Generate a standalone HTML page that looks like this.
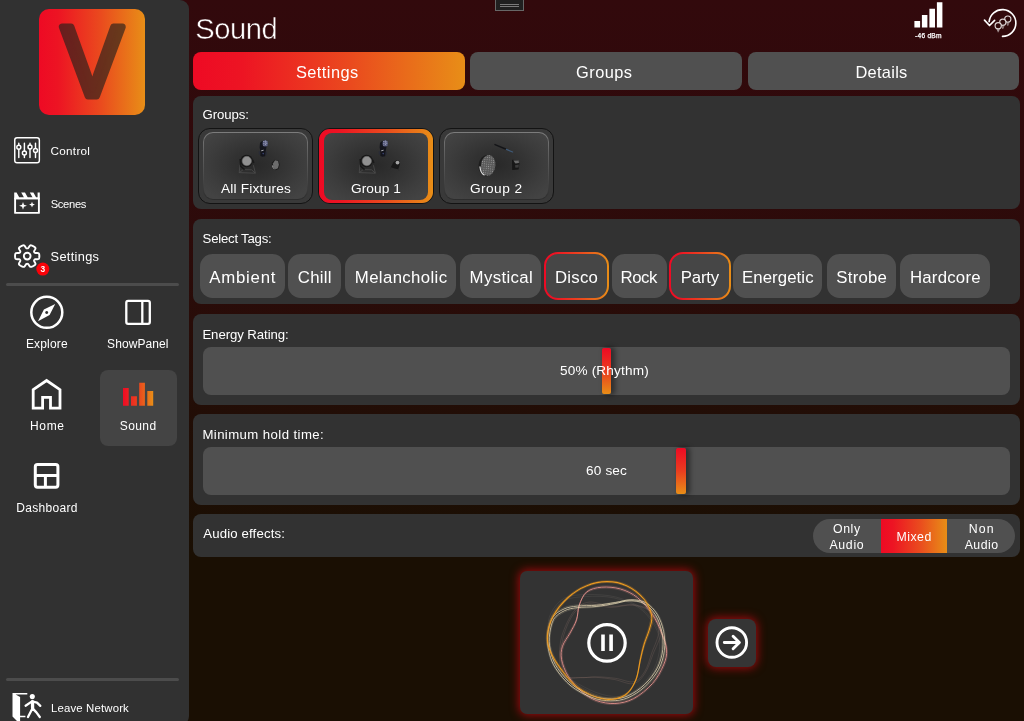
<!DOCTYPE html>
<html lang="en">
<head>
<meta charset="utf-8">
<title>Sound</title>
<style>
*{box-sizing:border-box;margin:0;padding:0}
html,body{width:1024px;height:721px;overflow:hidden}
body{font-family:"Liberation Sans",sans-serif;color:#fff;background:linear-gradient(180deg,#32090c 0%,#2f0a0b 25%,#280c08 45%,#1f0e05 63%,#1a0f03 77%,#1a0f03 100%);position:relative}
.a{position:absolute}
.t{position:absolute;white-space:nowrap;line-height:20px;height:20px;color:#fff}
.grad{background:linear-gradient(90deg,#ee0a24 0%,#ed1423 18%,#ea4a1e 58%,#e88e17 100%)}
.vgrad{background:linear-gradient(180deg,#ee0a24 0%,#ea3d1f 50%,#e88e17 100%)}
#side{left:0;top:0;width:188.5px;height:725px;background:#313131;border-radius:0 9px 9px 0}
.sep{left:6px;width:173px;height:3px;border-radius:1.5px;background:#4c4c4c}
.tab{top:52px;height:38px;border-radius:8px;background-color:#505050}
.panel{left:193px;width:826.6px;background:#323232;border-radius:8px}
.chip{top:253.7px;height:44.4px;border-radius:12.5px;background:#505050}
.ring{border-radius:14px;padding:2px}
.ring i{display:block;width:100%;height:100%;border-radius:12px;background:#464646}
.track{left:202.8px;width:807.4px;height:48px;background:#505050;border-radius:8px}
.thumb{width:9.6px;height:45.6px;border-radius:2px;box-shadow:3px 0 5px 1px rgba(0,0,0,.42)}
.gb{top:128.2px;width:115.2px;height:76px;border-radius:12px;background:#393939;border:1px solid #131313}
.gb i{position:absolute;left:4.2px;top:3.2px;right:4.2px;bottom:3.2px;border-radius:10px;border:1px solid transparent;background:radial-gradient(ellipse 62% 64% at 50% 48%,#292929 0%,#313131 35%,#3d3d3d 75%,#434343 100%) padding-box,linear-gradient(180deg,#7c7c7c 0%,#606060 30%,#474747 70%,#2c2c2c 100%) border-box}
.gb.sel{border-color:#131313}
.gb.sel b{position:absolute;left:0;top:0;right:0;bottom:0;border-radius:11px}
.gb.sel i{border:0;left:4.4px;right:4.4px;top:3.6px;bottom:3.4px;border-radius:8px;background:radial-gradient(ellipse 62% 64% at 50% 48%,#292929 0%,#313131 35%,#3d3d3d 75%,#434343 100%)}
svg{position:absolute;left:0;top:0;overflow:visible}
</style>
</head>
<body>
<div id="side" class="a"></div>
<div class="a grad" style="left:39.4px;top:8.5px;width:106px;height:106px;border-radius:10px"></div>
<div class="a sep" style="top:282.6px"></div>
<div class="a sep" style="top:678px"></div>
<div class="a" style="left:99.8px;top:369.7px;width:76.8px;height:76.8px;border-radius:8px;background:#444"></div>
<div class="a" style="left:495px;top:-1px;width:29px;height:12.4px;background:#202020;border:1px solid #676767;border-top:0"></div>
<div class="a" style="left:500px;top:4px;width:19px;height:1px;background:#7a7a7a"></div>
<div class="a" style="left:500px;top:6px;width:19px;height:1px;background:#7a7a7a"></div>
<div class="a tab grad" style="left:193px;width:272.2px"></div>
<div class="a tab" style="left:470.3px;width:271.8px"></div>
<div class="a tab" style="left:747.6px;width:271.6px"></div>
<div class="a panel" style="top:95.6px;height:113.2px"></div>
<div class="a panel" style="top:219.2px;height:85.2px"></div>
<div class="a panel" style="top:314.4px;height:90.2px"></div>
<div class="a panel" style="top:414.4px;height:90.2px"></div>
<div class="a panel" style="top:514.2px;height:43.1px"></div>
<div class="a gb" style="left:198.1px"><i></i></div>
<div class="a gb sel" style="left:318.4px"><b class="grad"></b><i></i></div>
<div class="a gb" style="left:438.6px"><i></i></div>
<div class="a chip" style="left:200.1px;width:84.8px"></div>
<div class="a chip" style="left:288.4px;width:52.8px"></div>
<div class="a chip" style="left:345px;width:111.0px"></div>
<div class="a chip" style="left:459.9px;width:81.6px"></div>
<div class="a ring grad" style="left:543.5px;top:252.2px;width:65.7px;height:47.4px"><i></i></div>
<div class="a chip" style="left:612px;width:54.7px"></div>
<div class="a ring grad" style="left:668.6px;top:252.2px;width:62.3px;height:47.4px"><i></i></div>
<div class="a chip" style="left:732.7px;width:89.8px"></div>
<div class="a chip" style="left:827px;width:69.2px"></div>
<div class="a chip" style="left:900.4px;width:89.5px"></div>
<div class="a track" style="top:346.9px"></div>
<div class="a track" style="top:446.9px"></div>
<div class="a thumb vgrad" style="left:601.6px;top:348.2px"></div>
<div class="a thumb vgrad" style="left:676.1px;top:448.2px"></div>
<div class="a" style="left:812.9px;top:518.8px;width:202.5px;height:33.9px;border-radius:17px;background:#505050;overflow:hidden"><div class="a grad" style="left:67.9px;top:0;width:66px;height:33.9px"></div></div>
<div class="a" style="left:520.2px;top:570.6px;width:173px;height:143.9px;border-radius:7px;background:#333;box-shadow:0 0 10px .5px rgba(180,10,18,.9)"></div>
<div class="a" style="left:707.8px;top:618.8px;width:47.9px;height:47.8px;border-radius:8px;background:#353535;box-shadow:0 0 10px .5px rgba(180,10,18,.9)"></div>
<svg width="1024" height="721" viewBox="0 0 1024 721" fill="none" stroke="none">
<defs><linearGradient id="g" x1="0" x2="1" y1="0" y2="0"><stop offset="0" stop-color="#ee0a24"/><stop offset=".55" stop-color="#ea4a1e"/><stop offset="1" stop-color="#e88e17"/></linearGradient></defs>
<g opacity=".66"><text x="92.3" y="95.7" text-anchor="middle" font-family="Liberation Sans, sans-serif" font-size="100" fill="#26211c" stroke="#26211c" stroke-width="7.2" stroke-linejoin="round" textLength="61.1" lengthAdjust="spacingAndGlyphs">V</text></g>
<g stroke="#fff" stroke-width="1.45" fill="none"><rect x="14.75" y="137.75" width="24.6" height="25" rx="2.3"/><path d="M18.8 143.2V145.2M18.8 149.4V157.6M24.4 143.2V150.9M24.4 155.1V157.6M30 143.2V144.9M30 149.1V157.6M35.5 143.2V148.3M35.5 152.5V157.6" stroke-linecap="round"/><circle cx="18.8" cy="147.3" r="2"/><circle cx="24.4" cy="153" r="2"/><circle cx="30" cy="147" r="2"/><circle cx="35.5" cy="150.4" r="2"/></g>
<g stroke="#fff" stroke-width="1.9" fill="none" stroke-linejoin="round"><path d="M15.1 198.4V212.9H38.9V198.4Z"/></g><path fill="#fff" d="M14.2 192.6H16.6L19.3 197.5H24L21.2 192.6H25L27.8 197.5H32.6L29.8 192.6H33.4L36.2 197.5H37.6V192.6H39.8V199.3H14.2Z"/><path fill="#fff" d="M23 201.9L24 204.8L26.9 205.8L24 206.8L23 209.7L22 206.8L19.1 205.8L22 204.8Z"/><path fill="#fff" d="M32 201.7L32.8 203.8L34.9 204.6L32.8 205.4L32 207.5L31.2 205.4L29.1 204.6L31.2 203.8Z"/>
<g stroke="#fff" stroke-width="1.9" fill="none" stroke-linejoin="round"><path d="M39.35 256.10 L39.35 256.40 L39.33 256.70 L39.31 257.00 L39.28 257.29 L39.24 257.59 L39.18 257.88 L39.11 258.17 L39.00 258.46 L38.83 258.72 L38.53 258.95 L38.05 259.12 L37.34 259.20 L36.53 259.21 L35.82 259.21 L35.30 259.25 L34.96 259.35 L34.72 259.47 L34.55 259.62 L34.42 259.78 L34.30 259.95 L34.20 260.13 L34.12 260.33 L34.07 260.54 L34.07 260.79 L34.16 261.12 L34.37 261.56 L34.73 262.14 L35.12 262.81 L35.41 263.42 L35.50 263.90 L35.43 264.25 L35.27 264.53 L35.06 264.76 L34.83 264.96 L34.59 265.15 L34.34 265.34 L34.08 265.51 L33.82 265.68 L33.55 265.84 L33.27 265.99 L33.00 266.14 L32.72 266.28 L32.43 266.41 L32.14 266.53 L31.85 266.64 L31.55 266.75 L31.24 266.83 L30.93 266.88 L30.60 266.88 L30.24 266.75 L29.84 266.44 L29.42 265.90 L29.00 265.25 L28.64 264.67 L28.34 264.27 L28.09 264.04 L27.85 263.91 L27.63 263.85 L27.41 263.82 L27.20 263.81 L26.99 263.82 L26.77 263.85 L26.55 263.91 L26.31 264.04 L26.06 264.27 L25.76 264.67 L25.40 265.25 L24.98 265.90 L24.56 266.44 L24.16 266.75 L23.80 266.88 L23.47 266.88 L23.16 266.83 L22.85 266.75 L22.55 266.64 L22.26 266.53 L21.97 266.41 L21.68 266.28 L21.40 266.14 L21.12 265.99 L20.85 265.84 L20.58 265.68 L20.32 265.51 L20.06 265.34 L19.81 265.15 L19.57 264.96 L19.34 264.76 L19.13 264.53 L18.97 264.25 L18.90 263.90 L18.99 263.42 L19.28 262.81 L19.67 262.14 L20.03 261.56 L20.24 261.12 L20.33 260.79 L20.33 260.54 L20.28 260.33 L20.20 260.13 L20.10 259.95 L19.98 259.78 L19.85 259.62 L19.68 259.47 L19.44 259.35 L19.10 259.25 L18.58 259.21 L17.87 259.21 L17.06 259.20 L16.35 259.12 L15.87 258.95 L15.57 258.72 L15.40 258.46 L15.29 258.17 L15.22 257.88 L15.16 257.59 L15.12 257.29 L15.09 257.00 L15.07 256.70 L15.05 256.40 L15.05 256.10 L15.05 255.80 L15.07 255.50 L15.09 255.20 L15.12 254.91 L15.16 254.61 L15.22 254.32 L15.29 254.03 L15.40 253.74 L15.57 253.48 L15.87 253.25 L16.35 253.08 L17.06 253.00 L17.87 252.99 L18.58 252.99 L19.10 252.95 L19.44 252.85 L19.68 252.73 L19.85 252.58 L19.98 252.42 L20.10 252.25 L20.20 252.07 L20.28 251.87 L20.33 251.66 L20.33 251.41 L20.24 251.08 L20.03 250.64 L19.67 250.06 L19.28 249.39 L18.99 248.78 L18.90 248.30 L18.97 247.95 L19.13 247.67 L19.34 247.44 L19.57 247.24 L19.81 247.05 L20.06 246.86 L20.32 246.69 L20.58 246.52 L20.85 246.36 L21.12 246.21 L21.40 246.06 L21.68 245.92 L21.97 245.79 L22.26 245.67 L22.55 245.56 L22.85 245.45 L23.16 245.37 L23.47 245.32 L23.80 245.32 L24.16 245.45 L24.56 245.76 L24.98 246.30 L25.40 246.95 L25.76 247.53 L26.06 247.93 L26.31 248.16 L26.55 248.29 L26.77 248.35 L26.99 248.38 L27.20 248.39 L27.41 248.38 L27.63 248.35 L27.85 248.29 L28.09 248.16 L28.34 247.93 L28.64 247.53 L29.00 246.95 L29.42 246.30 L29.84 245.76 L30.24 245.45 L30.60 245.32 L30.93 245.32 L31.24 245.37 L31.55 245.45 L31.85 245.56 L32.14 245.67 L32.43 245.79 L32.72 245.92 L33.00 246.06 L33.27 246.21 L33.55 246.36 L33.82 246.52 L34.08 246.69 L34.34 246.86 L34.59 247.05 L34.83 247.24 L35.06 247.44 L35.27 247.67 L35.43 247.95 L35.50 248.30 L35.41 248.78 L35.12 249.39 L34.73 250.06 L34.37 250.64 L34.16 251.08 L34.07 251.41 L34.07 251.66 L34.12 251.87 L34.20 252.07 L34.30 252.25 L34.42 252.42 L34.55 252.58 L34.72 252.73 L34.96 252.85 L35.30 252.95 L35.82 252.99 L36.53 252.99 L37.34 253.00 L38.05 253.08 L38.53 253.25 L38.83 253.48 L39.00 253.74 L39.11 254.03 L39.18 254.32 L39.24 254.61 L39.28 254.91 L39.31 255.20 L39.33 255.50 L39.35 255.80Z"/><circle cx="27.2" cy="256.1" r="3.35"/></g>
<circle cx="42.8" cy="269.1" r="6.5" fill="#fb0209"/>
<circle cx="46.8" cy="312.3" r="15.5" stroke="#fff" stroke-width="2.5"/><path fill="#fff" fill-rule="evenodd" d="M55.2 304L49.6 315L38 321.2L43.9 309.6ZM46.7 310.9a1.5 1.5 0 1 0 .01 0Z"/>
<g stroke="#fff" stroke-width="2.3" fill="none"><rect x="126.3" y="300.9" width="23.5" height="23" rx="1.8"/><path d="M142.3 300.9V323.9"/></g>
<path stroke="#fff" stroke-width="2.8" fill="none" stroke-linejoin="miter" d="M33.2 389.7L46.6 380.5L60 389.7V408.1H50.5V397.3H42.6V408.1H33.2Z"/>
<path fill="url(#g)" d="M123 388H128.7V405.7H123ZM131 396.3H136.9V405.7H131ZM139.2 382.7H144.9V405.7H139.2ZM147.3 391H153.2V405.7H147.3Z"/>
<g stroke="#fff" stroke-width="3" fill="none"><rect x="35.3" y="464.6" width="22.6" height="22.7" rx="2.2"/><path d="M35.3 475.4H57.9M45.4 475.4V487.3"/></g>
<path fill="#fff" d="M12.5 692.9H27.3V694.5H15.6L20.1 697V715.7H25.4V717.3H20.1V723H19L12.5 716.6Z"/><circle cx="32.3" cy="696.6" r="2.55" fill="#fff"/><path stroke="#fff" stroke-width="3.3" fill="none" stroke-linecap="round" d="M32.5 701.6L32.6 708.2"/><path stroke="#fff" stroke-width="2.3" fill="none" stroke-linecap="round" stroke-linejoin="round" d="M25.6 705.7L32 701.4L37 702.6L40.3 705.9M32.4 708.4L28 717M32.8 708.6L36.4 712.4L39.8 717"/>
<path fill="#fff" d="M914.4 20.9H920.1V27.5H914.4ZM921.9 15H927.4V27.5H921.9ZM929.4 8.8H935V27.5H929.4ZM936.9 2.2H942.4V27.5H936.9Z"/>
<path stroke="#fff" stroke-width="1.6" fill="none" stroke-linecap="round" d="M989.1 21.8A13.4 13.4 0 1 1 1002.5 36.4"/><path stroke="#fff" stroke-width="1.7" fill="none" stroke-linecap="round" stroke-linejoin="round" d="M984.5 20.1L989.5 25.5L994.6 20.4"/>
<circle cx="1007.8" cy="19.1" r="3.1" fill="#2f090b" stroke="#ddd5d5" stroke-width="1.15"/><path stroke="#bdb2b2" stroke-width=".9" d="M1006.3 22.8H1009.3M1006.6999999999999 24.0H1008.9M1007.1999999999999 25.1H1008.4"/><circle cx="1002.8" cy="22.3" r="3.1" fill="#2f090b" stroke="#ddd5d5" stroke-width="1.15"/><path stroke="#bdb2b2" stroke-width=".9" d="M1001.3 26.0H1004.3M1001.6999999999999 27.200000000000003H1003.9M1002.1999999999999 28.3H1003.4"/><circle cx="998.2" cy="25.7" r="3.1" fill="#2f090b" stroke="#ddd5d5" stroke-width="1.15"/><path stroke="#bdb2b2" stroke-width=".9" d="M996.7 29.4H999.7M997.1 30.6H999.3000000000001M997.6 31.7H998.8000000000001"/>
<circle cx="607" cy="642.9" r="18.2" stroke="#fff" stroke-width="3.2"/><path fill="#fff" d="M601.2 634.6H604.8V650.9H601.2ZM609.3 634.6H612.9V650.9H609.3Z"/>
<circle cx="731.8" cy="642.5" r="14.8" stroke="#fff" stroke-width="2.9"/><path stroke="#fff" stroke-width="2.9" fill="none" stroke-linecap="round" stroke-linejoin="round" d="M724.3 642.5H738.6M733.1 636.3L739.4 642.5L733.1 648.7"/>
<path d="M551.5 615.6C554.0 610.3 558.3 603.8 564.1 600.6C569.9 597.5 577.9 597.0 586.2 596.6C594.5 596.1 604.9 595.9 613.9 597.9C622.9 599.9 632.7 603.1 639.9 608.5C647.1 613.9 653.7 623.1 656.9 630.4C660.1 637.7 660.2 645.1 659.1 652.5C658.0 659.9 655.1 667.9 650.3 674.8C645.5 681.6 637.3 690.1 630.3 693.6C623.3 697.1 615.9 696.9 608.2 695.8C600.5 694.7 591.5 690.9 584.1 687.0C576.6 683.1 568.9 678.7 563.5 672.6C558.2 666.5 554.5 657.4 552.1 650.7C549.7 643.9 549.1 638.1 549.0 632.3C548.9 626.4 549.0 620.9 551.5 615.6Z" stroke="#9a8f88" stroke-width="0.6" stroke-opacity="0.22" fill="none"/><path d="M551.0 613.0C553.8 607.7 558.5 601.1 564.6 598.0C570.7 595.0 578.9 594.8 587.5 594.6C596.0 594.5 606.8 594.7 615.9 597.0C625.1 599.4 635.2 603.1 642.3 608.9C649.5 614.7 656.0 624.4 659.0 632.0C662.1 639.7 661.9 647.3 660.5 654.9C659.1 662.4 655.8 670.6 650.6 677.5C645.5 684.4 636.8 692.8 629.4 696.1C622.1 699.5 614.5 699.0 606.6 697.6C598.7 696.2 589.6 691.9 582.0 687.7C574.5 683.4 566.7 678.6 561.4 672.1C556.1 665.7 552.6 656.1 550.4 649.1C548.1 642.1 547.8 636.1 547.9 630.1C548.0 624.1 548.2 618.4 551.0 613.0Z" stroke="#9a8f88" stroke-width="0.6" stroke-opacity="0.22" fill="none"/><path d="M565.5 676.4C569.0 679.4 576.9 677.5 582.2 677.6C587.4 677.7 591.4 676.7 596.9 676.8C602.4 676.9 609.2 677.5 615.4 678.3C621.5 679.1 629.0 682.9 633.9 681.7C638.8 680.5 641.8 676.2 644.8 671.4C647.8 666.5 649.5 659.6 651.8 652.8C654.2 646.0 658.9 637.3 658.8 630.5C658.7 623.8 655.5 616.4 651.1 612.2C646.7 608.0 639.3 606.0 632.6 605.2C625.8 604.3 617.8 607.6 610.5 607.4C603.1 607.2 594.4 603.0 588.3 604.1C582.1 605.1 577.9 607.9 573.7 613.6C569.5 619.2 565.0 630.0 563.0 637.7C561.0 645.4 561.1 653.4 561.6 659.9C562.0 666.3 562.1 673.5 565.5 676.4Z" stroke="#b08a80" stroke-width="0.6" stroke-opacity="0.3" fill="none"/><path d="M563.1 675.8C566.6 679.0 574.8 677.4 580.2 677.6C585.6 677.9 589.7 677.0 595.4 677.3C601.1 677.6 608.1 678.5 614.4 679.5C620.7 680.6 628.3 684.7 633.3 683.7C638.4 682.6 641.7 678.3 644.9 673.4C648.2 668.6 650.2 661.5 652.9 654.5C655.5 647.6 660.7 638.8 660.9 631.9C661.0 624.9 658.0 617.2 653.6 612.7C649.2 608.2 641.7 605.9 634.7 604.8C627.8 603.7 619.5 606.8 611.9 606.3C604.3 605.9 595.5 601.3 589.1 602.1C582.8 602.9 578.3 605.7 573.8 611.3C569.2 617.0 564.3 628.0 561.9 635.8C559.6 643.7 559.4 652.0 559.6 658.6C559.8 665.3 559.7 672.6 563.1 675.8Z" stroke="#b08a80" stroke-width="0.6" stroke-opacity="0.3" fill="none"/><path d="M579.3 605.0C581.0 600.3 583.1 594.8 586.8 591.9C590.6 588.9 596.2 587.6 601.8 587.2C607.4 586.7 614.6 587.3 620.5 589.0C626.5 590.8 632.1 593.3 637.4 597.5C642.7 601.7 648.3 608.4 652.4 614.3C656.4 620.3 659.4 627.1 661.7 633.1C664.1 639.0 666.3 644.6 666.6 649.9C666.9 655.2 666.0 659.3 663.6 664.9C661.2 670.5 657.4 678.0 652.4 683.6C647.4 689.2 639.9 695.3 633.6 698.6C627.4 701.9 621.1 703.2 614.9 703.5C608.7 703.8 601.8 702.5 596.2 700.5C590.6 698.4 585.9 695.2 581.2 691.1C576.5 687.0 571.4 681.4 568.1 676.1C564.8 670.8 562.5 664.3 561.5 659.3C560.6 654.3 561.1 650.5 562.5 646.2C563.9 641.8 567.6 637.4 570.0 633.1C572.3 628.7 575.0 624.6 576.5 619.9C578.1 615.3 577.6 609.6 579.3 605.0Z" stroke="#dc8d88" stroke-width="1.0" stroke-opacity="0.95" fill="none"/><path d="M579.1 606.3C580.6 601.7 582.5 596.2 586.1 593.3C589.8 590.3 595.3 588.9 600.8 588.4C606.3 587.8 613.3 588.2 619.2 589.8C625.1 591.4 630.6 593.7 635.9 597.7C641.2 601.8 646.9 608.2 651.0 614.0C655.1 619.7 658.1 626.4 660.6 632.2C663.0 638.0 665.3 643.4 665.7 648.6C666.1 653.8 665.3 657.9 663.1 663.4C660.8 669.0 657.2 676.4 652.4 682.0C647.6 687.7 640.4 693.8 634.3 697.1C628.3 700.5 622.2 701.9 616.0 702.3C609.9 702.7 603.1 701.7 597.6 699.8C592.0 697.8 587.3 694.8 582.7 690.9C578.0 687.0 572.8 681.6 569.5 676.4C566.2 671.3 563.7 664.9 562.7 660.0C561.7 655.1 562.1 651.4 563.3 647.1C564.6 642.8 568.2 638.4 570.4 634.1C572.6 629.7 575.2 625.7 576.6 621.1C578.0 616.4 577.5 610.9 579.1 606.3Z" stroke="#dc8d88" stroke-width="0.6" stroke-opacity="0.4" fill="none"/><path d="M579.6 603.6C581.5 598.9 583.7 593.4 587.5 590.5C591.4 587.5 597.2 586.4 602.9 586.0C608.6 585.7 615.9 586.4 621.9 588.3C627.9 590.2 633.5 592.8 638.9 597.2C644.2 601.6 649.7 608.6 653.7 614.7C657.7 620.8 660.6 627.9 662.9 634.0C665.1 640.0 667.3 645.8 667.5 651.2C667.7 656.6 666.6 660.7 664.1 666.4C661.6 672.1 657.5 679.6 652.3 685.2C647.1 690.8 639.3 696.8 632.9 700.0C626.5 703.3 620.1 704.4 613.7 704.6C607.4 704.8 600.4 703.4 594.7 701.1C589.1 698.9 584.4 695.5 579.7 691.3C575.0 687.1 569.9 681.2 566.7 675.8C563.5 670.3 561.2 663.6 560.4 658.5C559.5 653.4 560.1 649.6 561.6 645.2C563.1 640.8 567.0 636.4 569.5 632.0C572.0 627.6 574.8 623.5 576.5 618.8C578.2 614.1 577.8 608.4 579.6 603.6Z" stroke="#dc8d88" stroke-width="0.6" stroke-opacity="0.4" fill="none"/><path d="M549.3 637.3C549.7 631.5 551.2 623.6 553.7 619.2C556.3 614.8 560.8 612.6 564.7 610.6C568.7 608.7 572.4 608.3 577.6 607.6C582.9 606.9 589.9 607.2 596.1 606.5C602.2 605.9 609.0 604.6 614.5 603.6C620.0 602.7 624.3 600.8 629.2 600.8C634.2 600.7 639.7 601.2 644.0 603.4C648.3 605.7 652.2 609.8 655.2 614.4C658.1 619.0 660.5 625.2 661.7 631.0C663.0 636.8 663.5 643.3 662.8 649.4C662.1 655.6 660.4 662.0 657.4 667.9C654.3 673.8 649.5 680.0 644.6 684.6C639.7 689.2 633.6 693.4 628.1 695.8C622.5 698.2 617.3 699.0 611.5 699.0C605.6 699.1 599.5 698.3 593.0 696.0C586.5 693.7 578.5 689.7 572.6 685.1C566.8 680.5 561.3 673.8 557.8 668.6C554.2 663.4 552.6 659.1 551.2 653.9C549.8 648.7 548.8 643.1 549.3 637.3Z" stroke="#f5e6c0" stroke-width="0.75" stroke-opacity="0.95" fill="none"/><path d="M547.6 636.3C548.1 630.3 549.8 622.2 552.5 617.7C555.2 613.1 559.8 611.0 564.0 609.0C568.1 607.1 571.9 606.7 577.3 606.1C582.7 605.4 590.0 605.8 596.3 605.3C602.6 604.7 609.6 603.4 615.3 602.5C621.0 601.6 625.5 599.8 630.5 599.8C635.6 599.8 641.3 600.3 645.7 602.7C650.2 605.2 654.1 609.5 657.1 614.2C660.0 619.0 662.4 625.4 663.6 631.4C664.8 637.4 665.2 644.1 664.4 650.4C663.6 656.7 661.8 663.4 658.6 669.4C655.4 675.4 650.2 681.7 645.1 686.4C640.0 691.1 633.7 695.3 628.0 697.7C622.2 700.1 616.9 700.8 610.8 700.8C604.8 700.7 598.5 699.9 591.8 697.4C585.2 694.9 577.0 690.7 571.0 685.9C565.0 681.1 559.5 674.1 555.9 668.7C552.3 663.2 550.8 658.8 549.4 653.4C548.0 648.0 547.1 642.2 547.6 636.3Z" stroke="#f5e6c0" stroke-width="0.75" stroke-opacity="0.95" fill="none"/><path d="M550.0 638.5C550.3 632.8 551.6 625.0 554.1 620.6C556.5 616.2 560.9 613.9 564.8 611.9C568.6 610.0 572.3 609.5 577.4 608.7C582.5 607.9 589.5 608.1 595.5 607.3C601.6 606.6 608.2 605.2 613.6 604.1C619.0 603.1 623.2 601.1 628.1 601.0C632.9 600.9 638.4 601.2 642.7 603.4C647.0 605.5 650.9 609.5 653.9 614.0C656.8 618.4 659.3 624.4 660.6 630.1C662.0 635.9 662.6 642.2 662.0 648.3C661.4 654.4 659.9 660.7 657.0 666.6C654.2 672.4 649.5 678.6 644.8 683.3C640.0 687.9 634.1 692.1 628.7 694.6C623.3 697.1 618.2 697.9 612.4 698.1C606.7 698.2 600.6 697.6 594.2 695.5C587.8 693.3 579.8 689.5 573.9 685.1C568.1 680.7 562.6 674.2 559.0 669.1C555.4 664.1 553.7 659.9 552.3 654.8C550.8 649.7 549.7 644.2 550.0 638.5Z" stroke="#f5e6c0" stroke-width="0.5" stroke-opacity="0.35" fill="none"/><path d="M546.9 635.0C547.5 629.0 549.4 620.8 552.2 616.2C555.1 611.7 559.8 609.6 564.0 607.7C568.2 605.8 572.1 605.5 577.6 604.9C583.1 604.4 590.5 605.0 596.9 604.5C603.3 604.0 610.4 602.9 616.3 602.1C622.1 601.3 626.6 599.5 631.8 599.6C636.9 599.7 642.7 600.4 647.1 602.9C651.5 605.4 655.4 609.9 658.4 614.8C661.3 619.7 663.5 626.2 664.7 632.3C665.8 638.5 666.1 645.2 665.1 651.6C664.2 658.0 662.2 664.7 658.8 670.8C655.5 676.8 650.2 683.1 644.9 687.8C639.6 692.4 633.1 696.5 627.2 698.9C621.4 701.2 615.9 701.8 609.8 701.7C603.7 701.5 597.3 700.6 590.6 697.9C583.9 695.3 575.7 690.8 569.7 685.8C563.7 680.8 558.3 673.6 554.7 668.0C551.2 662.5 549.7 657.9 548.4 652.4C547.1 646.9 546.3 641.0 546.9 635.0Z" stroke="#f5e6c0" stroke-width="0.5" stroke-opacity="0.35" fill="none"/><path d="M607.4 581.6C614.1 581.6 621.0 583.0 627.1 585.9C633.2 588.8 639.8 594.1 643.9 599.0C648.0 603.9 650.6 610.4 651.6 615.3C652.6 620.2 651.0 623.5 649.7 628.4C648.5 633.2 645.7 639.1 644.1 644.3C642.6 649.4 641.7 653.3 640.4 659.3C639.0 665.2 638.4 673.9 635.9 679.9C633.4 685.8 630.6 691.7 625.2 694.9C619.8 698.0 611.6 700.2 603.7 699.0C595.7 697.7 584.6 692.4 577.5 687.4C570.3 682.3 565.2 674.9 560.6 668.6C556.0 662.4 551.9 655.5 549.7 649.9C547.6 644.3 546.9 640.5 547.5 634.9C548.1 629.3 549.7 622.4 553.1 616.2C556.5 610.0 562.5 602.6 568.1 597.5C573.7 592.4 580.3 588.3 586.8 585.7C593.4 583.0 600.7 581.5 607.4 581.6Z" stroke="#ec9a20" stroke-width="1.15" stroke-opacity="1" fill="none"/><path d="M606.3 582.5C612.9 582.4 619.7 583.6 625.7 586.3C631.7 589.1 638.4 594.2 642.5 598.9C646.6 603.6 649.3 610.0 650.4 614.8C651.4 619.5 649.9 622.9 648.8 627.7C647.6 632.4 645.0 638.3 643.6 643.4C642.1 648.5 641.4 652.3 640.2 658.2C638.9 664.0 638.5 672.6 636.1 678.5C633.8 684.4 631.1 690.2 625.9 693.4C620.7 696.7 612.7 699.0 604.9 697.9C597.0 696.8 586.0 691.8 578.9 687.0C571.7 682.1 566.6 674.9 562.0 668.9C557.3 662.9 553.2 656.2 550.9 650.7C548.7 645.2 548.0 641.6 548.5 636.0C548.9 630.5 550.4 623.7 553.6 617.5C556.9 611.3 562.6 604.0 568.0 598.9C573.4 593.7 579.8 589.6 586.2 586.9C592.5 584.2 599.7 582.6 606.3 582.5Z" stroke="#ec9a20" stroke-width="0.6" stroke-opacity="0.45" fill="none"/><path d="M608.6 580.7C615.4 580.8 622.3 582.4 628.5 585.4C634.6 588.5 641.3 594.0 645.4 599.1C649.4 604.2 652.0 610.8 652.9 615.8C653.7 620.8 652.1 624.2 650.7 629.1C649.3 634.0 646.4 640.0 644.7 645.2C643.0 650.4 642.1 654.4 640.6 660.4C639.1 666.4 638.3 675.2 635.6 681.2C632.9 687.2 630.0 693.1 624.4 696.3C618.9 699.4 610.5 701.5 602.4 700.0C594.4 698.6 583.2 693.0 576.0 687.7C568.8 682.4 563.8 674.8 559.2 668.3C554.6 661.9 550.7 654.8 548.5 649.1C546.4 643.3 545.9 639.5 546.5 633.8C547.2 628.1 549.0 621.1 552.6 614.8C556.2 608.6 562.4 601.1 568.2 596.1C574.0 591.0 580.8 587.0 587.5 584.4C594.2 581.9 601.7 580.5 608.6 580.7Z" stroke="#ec9a20" stroke-width="0.6" stroke-opacity="0.45" fill="none"/>
<defs><pattern id="dots" width="2.2" height="2.2" patternUnits="userSpaceOnUse"><rect width="2.2" height="2.2" fill="#5a5a5a"/><circle cx="1.1" cy="1.1" r=".5" fill="#9c9c9c"/></pattern><pattern id="dots2" width="1.9" height="1.9" patternUnits="userSpaceOnUse"><rect width="1.9" height="1.9" fill="#7c7c7c"/><circle cx=".95" cy=".95" r=".6" fill="#b9b9b9"/></pattern></defs><g transform="translate(246.6 161)"><path stroke="#4d4d4d" stroke-width=".8" fill="none" d="M-6.6 3.6L-7.4 11.6L8.8 12.2L6.8 4.2M-7.2 11.6L-3.4 8.6L5 8.8L8.6 12"/><path stroke="#191919" stroke-width="1.6" fill="none" d="M-6.4 -2L-5.8 5.4L-2 8.6M6.2 -1L7.2 2"/><circle cx="0" cy="0" r="6.2" fill="#161616"/><circle cx="0.2" cy="0" r="4.7" fill="url(#dots2)"/><circle cx="0.2" cy="0" r="4.7" fill="none" stroke="#6a6a6a" stroke-width=".6"/></g><g transform="translate(262.6 149.6)"><path fill="#14151c" d="M-2.6 -6.4C-1.6 -9 3.4 -9.6 4.6 -6.6L3.6 -1L3 2.4L2.6 6.6L-0.2 7.2L-2.2 6.4L-2.2 1.4L-3 -2Z"/><path stroke="#24283a" stroke-width=".8" fill="none" d="M-3.4 1.6L-3.2 5M3.8 2L3.4 5.6"/><ellipse cx="2.6" cy="-6.2" rx="2.7" ry="3.2" fill="#454a6c"/><path stroke="#d4d6ee" stroke-width=".75" stroke-dasharray="1.1 .7" d="M1.3 -8.6V-4M2.8 -9V-3.6M4.2 -8.2V-4.2"/><path stroke="#cfcfd6" stroke-width=".8" d="M-1.4 1.2L1 .6"/><circle cx=".6" cy="4" r=".8" fill="#3a4470"/></g><g transform="translate(275.3 164.7)"><path fill="#1a1a1a" d="M-3.6 -1.6L-.6 -5L3.4 -4L4.4 0L3.2 4.4L.2 5.6L-3 3.2Z"/><path fill="#6c6c6c" d="M-2.4 -1.2L-.2 -4.4L2.8 -3.6L3.6 0L2.6 3.6L.4 4.6L-2 2.6Z"/><path stroke="#b5b5b5" stroke-width=".9" fill="none" d="M-2.8 .8L-2.2 3L-.6 4.6"/></g><g transform="translate(366.6 161)"><path stroke="#4d4d4d" stroke-width=".8" fill="none" d="M-6.6 3.6L-7.4 11.6L8.8 12.2L6.8 4.2M-7.2 11.6L-3.4 8.6L5 8.8L8.6 12"/><path stroke="#191919" stroke-width="1.6" fill="none" d="M-6.4 -2L-5.8 5.4L-2 8.6M6.2 -1L7.2 2"/><circle cx="0" cy="0" r="6.2" fill="#161616"/><circle cx="0.2" cy="0" r="4.7" fill="url(#dots2)"/><circle cx="0.2" cy="0" r="4.7" fill="none" stroke="#6a6a6a" stroke-width=".6"/></g><g transform="translate(382.6 149.6)"><path fill="#14151c" d="M-2.6 -6.4C-1.6 -9 3.4 -9.6 4.6 -6.6L3.6 -1L3 2.4L2.6 6.6L-0.2 7.2L-2.2 6.4L-2.2 1.4L-3 -2Z"/><path stroke="#24283a" stroke-width=".8" fill="none" d="M-3.4 1.6L-3.2 5M3.8 2L3.4 5.6"/><ellipse cx="2.6" cy="-6.2" rx="2.7" ry="3.2" fill="#454a6c"/><path stroke="#d4d6ee" stroke-width=".75" stroke-dasharray="1.1 .7" d="M1.3 -8.6V-4M2.8 -9V-3.6M4.2 -8.2V-4.2"/><path stroke="#cfcfd6" stroke-width=".8" d="M-1.4 1.2L1 .6"/><circle cx=".6" cy="4" r=".8" fill="#3a4470"/></g><g transform="translate(395.6 164.6)"><path fill="#181818" d="M-4.8 2.6L-2 -2.6L1.4 -4.6L4 -3.4L4.2 0L2.6 4.6L-1 4Z"/><path stroke="#2a2a2a" stroke-width=".8" d="M-4.6 3L-5.4 5M2.4 4.4L3.2 6"/><circle cx="1.9" cy="-2" r="1.9" fill="#a4a4a4"/></g><g transform="translate(487.6 165.3) rotate(6)"><ellipse cx="-1" cy="0.4" rx="8" ry="10.7" fill="#1d1d1d"/><ellipse cx="0.6" cy="0" rx="7.2" ry="10.5" fill="url(#dots)"/><path stroke="#dcdcdc" stroke-width="1.2" fill="none" stroke-linecap="round" d="M-7.4 2.4C-6.6 6.6 -4.4 9.2 -2.4 10"/></g><path stroke="#141518" stroke-width="1.5" stroke-linecap="round" d="M495 144.6L505.6 149"/><path stroke="#3f5a78" stroke-width="1.2" stroke-linecap="round" d="M506.4 149.4L512.6 152"/><path fill="#171717" d="M512 159.8L517.6 160.2L519.4 163.4L518.6 169.4L512.2 170Z"/><path fill="#6a6a6a" d="M513.4 160.4L518.6 160.6L519 163L515.4 163.6Z"/><path fill="#3c3c3c" d="M515 165.2L518.8 164.6L518.6 167.4L515.4 167.8Z"/>
</svg>
<div class="a" id="tx" style="left:0;top:0;width:1024px;height:721px;will-change:transform">
<div class="t" style="left:50.6px;top:141.2px;font-size:11.7px;letter-spacing:0.28px;">Control</div>
<div class="t" style="left:50.7px;top:193.9px;font-size:11.2px;letter-spacing:-0.31px;">Scenes</div>
<div class="t" style="left:50.6px;top:247.1px;font-size:12.8px;letter-spacing:0.31px;">Settings</div>
<div class="t" style="left:40.6px;top:259.3px;font-size:8.4px;font-weight:bold;">3</div>
<div class="t" style="left:25.9px;top:334.3px;font-size:12px;letter-spacing:0.17px;">Explore</div>
<div class="t" style="left:107.1px;top:334.3px;font-size:12px;letter-spacing:0.07px;">ShowPanel</div>
<div class="t" style="left:30.1px;top:415.7px;font-size:12px;letter-spacing:0.6px;">Home</div>
<div class="t" style="left:119.8px;top:415.7px;font-size:12px;letter-spacing:0.4px;">Sound</div>
<div class="t" style="left:16.3px;top:497.5px;font-size:12px;letter-spacing:0.3px;">Dashboard</div>
<div class="t" style="left:51.0px;top:697.8px;font-size:11.4px;letter-spacing:0.15px;">Leave Network</div>
<div class="t" style="left:195.3px;top:18.6px;font-size:29.2px;letter-spacing:-0.46px;-webkit-text-stroke:.55px #31090c;">Sound</div>
<div class="t" style="left:295.9px;top:62.2px;font-size:16.4px;letter-spacing:0.45px;">Settings</div>
<div class="t" style="left:576.0px;top:62.2px;font-size:16.4px;letter-spacing:0.46px;">Groups</div>
<div class="t" style="left:855.5px;top:62.2px;font-size:16.4px;letter-spacing:0.28px;">Details</div>
<div class="t" style="left:202.6px;top:105.0px;font-size:13.2px;letter-spacing:-0.09px;">Groups:</div>
<div class="t" style="left:202.6px;top:229.0px;font-size:13.2px;letter-spacing:-0.23px;">Select Tags:</div>
<div class="t" style="left:202.4px;top:324.5px;font-size:13.2px;letter-spacing:-0.07px;">Energy Rating:</div>
<div class="t" style="left:202.4px;top:424.5px;font-size:13.2px;letter-spacing:0.41px;">Minimum hold time:</div>
<div class="t" style="left:203.2px;top:524.2px;font-size:13.2px;letter-spacing:0.16px;">Audio effects:</div>
<div class="t" style="left:220.9px;top:179.3px;font-size:13.7px;letter-spacing:0.21px;">All Fixtures</div>
<div class="t" style="left:351.0px;top:179.3px;font-size:13.7px;letter-spacing:0.07px;">Group 1</div>
<div class="t" style="left:470.0px;top:179.3px;font-size:13.7px;letter-spacing:0.43px;">Group 2</div>
<div class="t" style="left:209.3px;top:268.1px;font-size:16.8px;letter-spacing:0.76px;">Ambient</div>
<div class="t" style="left:297.8px;top:268.1px;font-size:16.8px;letter-spacing:0.26px;">Chill</div>
<div class="t" style="left:354.8px;top:268.1px;font-size:16.8px;letter-spacing:0.37px;">Melancholic</div>
<div class="t" style="left:469.6px;top:268.1px;font-size:16.8px;letter-spacing:0.35px;">Mystical</div>
<div class="t" style="left:554.9px;top:268.1px;font-size:16.8px;letter-spacing:0.25px;">Disco</div>
<div class="t" style="left:620.6px;top:268.1px;font-size:16.8px;letter-spacing:-0.49px;">Rock</div>
<div class="t" style="left:680.8px;top:268.1px;font-size:16.8px;letter-spacing:-0.2px;">Party</div>
<div class="t" style="left:742.0px;top:268.1px;font-size:16.8px;letter-spacing:0.08px;">Energetic</div>
<div class="t" style="left:836.3px;top:268.1px;font-size:16.8px;letter-spacing:0.24px;">Strobe</div>
<div class="t" style="left:909.9px;top:268.1px;font-size:16.8px;letter-spacing:0.24px;">Hardcore</div>
<div class="t" style="left:559.9px;top:361.1px;font-size:13.6px;letter-spacing:0.19px;">50% (Rhythm)</div>
<div class="t" style="left:586.1px;top:461.1px;font-size:13.6px;letter-spacing:0.13px;">60 sec</div>
<div class="t" style="left:833.0px;top:519.3px;font-size:12.3px;letter-spacing:0.6px;">Only</div>
<div class="t" style="left:829.4px;top:535.0px;font-size:12.3px;letter-spacing:0.71px;">Audio</div>
<div class="t" style="left:896.5px;top:526.9px;font-size:12.3px;letter-spacing:0.5px;">Mixed</div>
<div class="t" style="left:968.7px;top:519.3px;font-size:12.3px;letter-spacing:1.12px;">Non</div>
<div class="t" style="left:964.7px;top:535.0px;font-size:12.3px;letter-spacing:0.46px;">Audio</div>
<div class="t" style="left:915.0px;top:25.6px;font-size:6.65px;letter-spacing:0.24px;-webkit-text-stroke:.25px #fff;">-46 dBm</div>
</div>
</body>
</html>
